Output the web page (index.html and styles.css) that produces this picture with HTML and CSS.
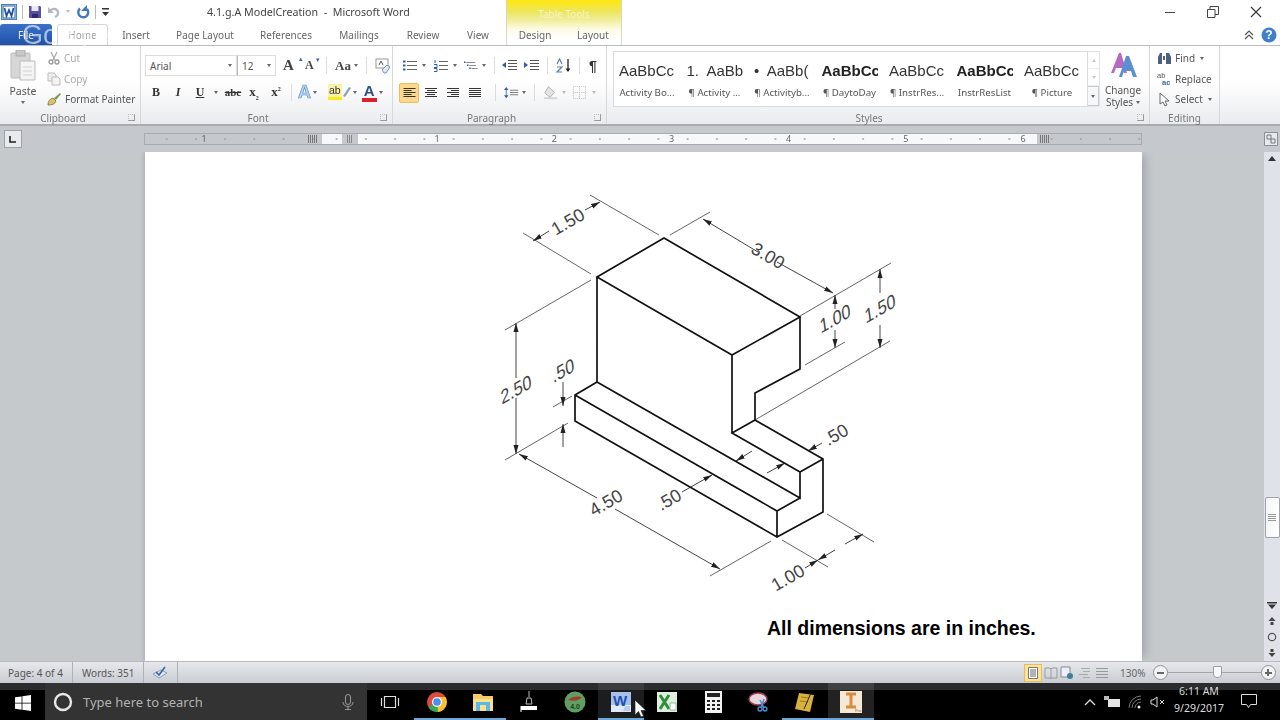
FILE: index.html
```html
<!DOCTYPE html>
<html lang="en">
<head>
<meta charset="utf-8">
<title>4.1.g.A ModelCreation - Microsoft Word</title>
<link rel="stylesheet" href="styles.css">
</head>
<body>
<div class="app">
  <header class="titlebar">
    <div class="qat">
      <svg class="q" width="16" height="16" viewBox="0 0 16 16"><rect x=".5" y=".5" width="15" height="15" fill="#dbe8f8" stroke="#4a7fc0"/><rect x="2" y="2" width="12" height="12" fill="#fff" stroke="#2b62ad"/><path d="M3.5 4l2 8 2.500-6 2.500 6 2-8" fill="none" stroke="#1f4f9e" stroke-width="1.700"/></svg>
      <i class="qsep"></i>
      <svg class="q" width="14" height="14" viewBox="0 0 14 14"><path d="M1 1h11l1 1v11H1z" fill="#5a4f9c"/><rect x="3.500" y="1" width="7" height="5" fill="#e8e8f4"/><rect x="4" y="9" width="6" height="4" fill="#2f2a6c"/></svg>
      <svg class="q" width="14" height="14" viewBox="0 0 14 14"><path d="M3 6c2-3 7-3 8 1 .5 2-1 4-3 5" fill="none" stroke="#b4b8bf" stroke-width="2.200"/><path d="M1 2v6h6z" fill="#b4b8bf"/></svg>
      <i class="caret pale"></i>
      <svg class="q redo" width="14" height="14" viewBox="0 0 14 14"><path d="M4 3.500a5 5 0 1 0 7 .5" fill="none" stroke="#3d78c8" stroke-width="2.400"/><path d="M11 0v6H5z" fill="#3d78c8"/></svg>
      <i class="qsep"></i>
      <svg class="q" width="9" height="10" viewBox="0 0 9 10"><rect x="1" y="1" width="7" height="1.500" fill="#333"/><path d="M1 5h7L4.500 9z" fill="#333"/></svg>
    </div>
    <div class="doc-title">4.1.g.A ModelCreation&nbsp; - &nbsp;Microsoft Word</div>
    <div class="winctl">
      <svg width="12" height="12" viewBox="0 0 12 12"><path d="M1 6.500h10" stroke="#444"/></svg>
      <svg width="12" height="12" viewBox="0 0 12 12"><path d="M.5 3.500h7.500v8H.5zM3 3.500V.5h8.500v8H8" fill="none" stroke="#444"/></svg>
      <svg width="12" height="12" viewBox="0 0 12 12"><path d="M1 1l10 10M11 1L1 11" stroke="#333" stroke-width="1.100"/></svg>
    </div>
  </header>

  <div class="context"><span>Table Tools</span></div>

  <nav class="tabs">
    <span class="tab file">File</span>
    <span class="tab home">Home</span>
    <span class="tab t-insert">Insert</span>
    <span class="tab t-page">Page Layout</span>
    <span class="tab t-ref">References</span>
    <span class="tab t-mail">Mailings</span>
    <span class="tab t-rev">Review</span>
    <span class="tab t-view">View</span>
    <span class="tab t-design">Design</span>
    <span class="tab t-design">Layout</span>
    <span class="tab-right">
      <svg width="12" height="10" viewBox="0 0 12 10"><path d="M2 5l4-4 4 4M2 9l4-4 4 4" fill="none" stroke="#555" stroke-width="1.200"/></svg>
      <svg width="16" height="16" viewBox="0 0 16 16"><circle cx="8" cy="8" r="7.500" fill="#3f7fcc"/><text x="8" y="12" class="help">?</text></svg>
    </span>
  </nav>
  <div class="watermark">Google</div>

  <section class="ribbon">
    <div class="group g-clip">
      <div class="gbody clip">
        <div class="paste">
          <svg width="26" height="31" viewBox="0 0 26 31"><rect x="1" y="3" width="19" height="25" rx="1" fill="#d6d6d6" stroke="#bbb"/><rect x="6" y="0" width="9" height="6" fill="#c8c8c8" stroke="#aaa"/><path d="M10 11h15v19H10z" fill="#f4f4f4" stroke="#bcbcbc"/><path d="M13 17h9M13 21h9M13 25h9" stroke="#d0d0d0"/></svg>
          <span class="pl">Paste</span>
          <i class="caret"></i>
        </div>
        <div class="clip-list">
          <div class="cr off"><svg width="14" height="14" viewBox="0 0 14 14"><path d="M4 1l4 8M10 1L6 9" stroke="#aaa" stroke-width="1.300"/><circle cx="4" cy="11" r="2" fill="none" stroke="#999" stroke-width="1.300"/><circle cx="10" cy="11" r="2" fill="none" stroke="#999" stroke-width="1.300"/></svg><span>Cut</span></div>
          <div class="cr off"><svg width="14" height="14" viewBox="0 0 14 14"><path d="M1 1h6l2 2v6H1z" fill="#eee" stroke="#bbb"/><path d="M5 5h6l2 2v6H5z" fill="#f4f4f4" stroke="#bbb"/></svg><span>Copy</span></div>
          <div class="cr"><svg width="15" height="14" viewBox="0 0 15 14"><path d="M1 13c0-4 2-6 5-7l3 3c-1 3-4 4-8 4z" fill="#d8c46a" stroke="#8f8440"/><path d="M7 6l6-5 1 1-5 6z" fill="#7a9a54"/></svg><span>Format Painter</span></div>
        </div>
      </div>
      <div class="glabel l-clip">Clipboard<i class="launch"></i></div>
    </div>

    <div class="group g-font">
      <div class="gbody fontb">
        <div class="row r1">
          <div class="combo c-font">Arial<i class="caret"></i></div>
          <div class="combo c-size">12<i class="caret"></i></div>
          <span class="glyph big">A<sup class="up">▴</sup></span>
          <span class="glyph small">A<sup class="up">▾</sup></span>
          <i class="vsep"></i>
          <span class="glyph aa">Aa</span><i class="caret"></i>
          <i class="vsep"></i>
          <svg class="erase" width="16" height="16" viewBox="0 0 16 16"><rect x="1" y="1" width="12" height="9" fill="#fff" stroke="#999"/><path d="M4 7l2-4 2 4" fill="none" stroke="#555"/><path d="M7 12l5-5 3 2-4 6H9z" fill="#dfe8f4" stroke="#7e93b0"/></svg>
        </div>
        <div class="row r2">
          <b class="fmt f-b">B</b>
          <i class="fmt f-i">I</i>
          <u class="fmt f-u">U</u><i class="caret"></i>
          <s class="fmt f-s">abc</s>
          <span class="fmt f-x">x<sub>2</sub></span>
          <span class="fmt f-x2">x<sup>2</sup></span>
          <i class="vsep"></i>
          <span class="fxa">A</span><i class="caret"></i>
          <span class="hl">ab</span>
          <svg class="pen" width="9" height="14" viewBox="0 0 9 14"><path d="M1 11l6-9 2 1-6 9z" fill="#8aa0c0"/></svg><i class="caret"></i>
          <span class="fc">A</span><i class="caret"></i>
        </div>
      </div>
      <div class="glabel l-font">Font<i class="launch"></i></div>
    </div>

    <div class="group g-para">
      <div class="gbody parab">
        <div class="row p1">
          <svg width="14" height="13" viewBox="0 0 14 13"><path d="M4 2.500h10M4 6.500h10M4 10.500h10" stroke="#666"/><path d="M0 1.500h2.500v2H0zM0 5.500h2.500v2H0zM0 9.500h2.500v2H0z" fill="#2f5fa0"/></svg><i class="caret m5"></i>
          <svg class="m8" width="14" height="13" viewBox="0 0 14 13"><path d="M5 2.500h9M5 6.500h9M5 10.500h9" stroke="#666"/><path d="M1 1v3M0 5.500h3v3H0M0 9.500h3v3H0" fill="none" stroke="#2f5fa0"/></svg><i class="caret m5"></i>
          <svg class="m7" width="15" height="13" viewBox="0 0 20 13"><path d="M3 2.500h12M7 6.500h9M10 10.500h8" stroke="#666"/><path d="M0 1h2v2H0zM4 5h2v2H4zM7 9h2v2H7z" fill="#2f5fa0"/></svg><i class="caret m3"></i>
          <i class="vsep m6"></i>
          <svg class="m7" width="15" height="13" viewBox="0 0 15 13"><path d="M6 1.500h9M6 4.500h9M6 7.500h9M6 10.500h9" stroke="#555"/><path d="M0 6l4-3v6z" fill="#2f5fa0"/></svg>
          <svg class="m7" width="15" height="13" viewBox="0 0 15 13"><path d="M6 1.500h9M6 4.500h9M6 7.500h9M6 10.500h9" stroke="#555"/><path d="M4 6L0 3v6z" fill="#2f5fa0"/></svg>
          <i class="vsep m5"></i>
          <svg class="m7" width="16" height="15" viewBox="0 0 16 15"><path d="M13 1v12" stroke="#222" stroke-width="1.300"/><path d="M10.500 10.500l2.500 3.500 2.500-3.500z" fill="#222"/><path d="M2 6l2.500-5L7 6M2 9h5l-5 5h5" fill="none" stroke="#5b7fb5" stroke-width="1.200"/></svg>
          <i class="vsep m8"></i>
          <span class="pil m9">¶</span>
        </div>
        <div class="row p2">
          <span class="al on"><svg width="13" height="11" viewBox="0 0 12 11"><path d="M0 1.500h12M0 3.500h8M0 5.500h12M0 7.500h8M0 9.500h12" stroke="#333"/></svg></span>
          <span class="al"><svg width="14" height="11" viewBox="0 0 12 11"><path d="M0 1.500h12M2 3.500h8M0 5.500h12M2 7.500h8M0 9.500h12" stroke="#333"/></svg></span>
          <span class="al"><svg width="14" height="11" viewBox="0 0 12 11"><path d="M0 1.500h12M4 3.500h8M0 5.500h12M4 7.500h8M0 9.500h12" stroke="#333"/></svg></span>
          <span class="al"><svg width="14" height="11" viewBox="0 0 12 11"><path d="M0 1.500h12M0 3.500h12M0 5.500h12M0 7.500h12M0 9.500h12" stroke="#333"/></svg></span>
          <i class="vsep m2"></i>
          <svg class="m8" width="15" height="15" viewBox="0 0 20 15"><path d="M3 3v9" stroke="#2f5fa0"/><path d="M0 4l3-4 3 4zM0 11l3 4 3-4z" fill="#2f5fa0"/><path d="M8 4.500h11M8 7.500h11M8 10.500h11" stroke="#555"/></svg><i class="caret m3"></i>
          <i class="vsep m7"></i>
          <svg class="m8" width="15" height="15" viewBox="0 0 17 15"><path d="M6 1l7 6-5 6-6-5z" fill="#e3e3e3" stroke="#aaa"/><path d="M1 14h15" stroke="#d4d4d4" stroke-width="2"/></svg><i class="caret pale m4"></i>
          <svg class="m7" width="13" height="13" viewBox="0 0 14 14"><path d="M.5.500h13v13H.5zM7 .5v13M.5 7h13" fill="none" stroke="#bbb" stroke-dasharray="1 1"/></svg><i class="caret pale m6"></i>
        </div>
      </div>
      <div class="glabel l-para">Paragraph<i class="launch"></i></div>
    </div>

    <div class="group g-styles">
      <div class="gbody stylesb">
        <div class="gallery">
          <div class="sty"><span class="sa">AaBbCc</span><span class="sl">Activity Bo...</span></div>
          <div class="sty"><span class="sa">1.&nbsp; AaBb</span><span class="sl">¶ Activity ...</span></div>
          <div class="sty"><span class="sa">•&nbsp; AaBb(</span><span class="sl">¶ Activityb...</span></div>
          <div class="sty"><span class="sa bold">AaBbCc</span><span class="sl">¶ DaytoDay</span></div>
          <div class="sty"><span class="sa">AaBbCc</span><span class="sl">¶ InstrRes...</span></div>
          <div class="sty"><span class="sa bold">AaBbCc</span><span class="sl">InstrResList</span></div>
          <div class="sty"><span class="sa">AaBbCc</span><span class="sl">¶ Picture</span></div>
        </div>
        <div class="spin">
          <span class="sp"><i class="tri-up"></i></span>
          <span class="sp"><i class="tri-dn"></i></span>
          <span class="sp more"><i class="tri-more"></i></span>
        </div>
        <div class="change">
          <svg width="28" height="28" viewBox="0 0 28 28"><path d="M2 22L10 2h2l6 20h-3l-1.500-5H7L5 22z" fill="#b56ac0"/><path d="M10 26L17 5h3l8 21h-4l-2-6h-7l-2 6z" fill="#5b8fd0"/></svg>
          <span>Change</span>
          <span>Styles<i class="caret"></i></span>
        </div>
      </div>
      <div class="glabel l-sty">Styles<i class="launch"></i></div>
    </div>

    <div class="group g-edit">
      <div class="gbody clip-list editb">
        <div class="cr dim"><svg width="15" height="13" viewBox="0 0 15 13"><path d="M1 12V5l2-4h2v11zM9 12V1h3l2 4v7zM6 4h2v4H6z" fill="#4c5f80"/></svg><span>Find</span><i class="caret"></i></div>
        <div class="cr dim"><svg width="15" height="14" viewBox="0 0 15 14"><text x="0" y="6" class="rp">ab</text><text x="5" y="13" class="rp blue">ac</text></svg><span>Replace</span></div>
        <div class="cr dim"><svg width="15" height="15" viewBox="0 0 15 15"><path d="M3 1v11l3-2 2 4 2-1-2-4h4z" fill="#fff" stroke="#666"/></svg><span>Select</span><i class="caret"></i></div>
      </div>
      <div class="glabel">Editing</div>
    </div>
  </section>

  <div class="rulerbar">
    <span class="corner"><svg width="10" height="10" viewBox="0 0 10 10"><path d="M2 2v6h6" fill="none" stroke="#222" stroke-width="1.600"/></svg></span>
    <div class="ruler">
      <div class="seg seg-l"><span class="dg">1</span></div>
      <div class="seg seg-w">
        <span class="dg">1</span><span class="dg">2</span><span class="dg">3</span><span class="dg">4</span><span class="dg">5</span><span class="dg">6</span>
      </div>
      <div class="seg seg-r"></div>
      <i class="stop s1"></i><i class="stop s2"></i><i class="stop s3"></i>
    </div>
    <span class="viewbtn"><svg width="14" height="14" viewBox="0 0 14 14"><path d="M.5.500h13v13H.5z" fill="#e6e9ee" stroke="#8a8f98"/><path d="M3 3h4v4H3zM7 7h4v4H7z" fill="none" stroke="#777"/></svg></span>
  </div>

  <main class="workspace">
    <div class="page">
      <svg class="drawing" width="997" height="460" viewBox="145 152 997 460">
        <defs>
          <marker id="ah" markerWidth="9" markerHeight="6" refX="9" refY="3" orient="auto-start-reverse" markerUnits="userSpaceOnUse"><path d="M0 .5L9 3 0 5.500z" fill="#222"/></marker>
        </defs>
        <g class="thin">
          <path d="M523 233L591 274M590 195L659 235M670 235L710 212M505 330L591 280M505 460L568 423M553 407L572 396M800 316L891 263M755 420L890 341M805 365L845 342M710 576L771 541M827 514L874 542M782 540L828 567"/>
          <path class="dim" d="M549 231L533 241"/><path class="dim" d="M585 210L600 202"/>
          <path class="dim" d="M758 252L703 219"/><path class="dim" d="M777 262L833 293"/>
          <path class="dim" d="M835 309L835 295"/><path class="dim" d="M835 330L835 348"/>
          <path class="dim" d="M880 293L880 269"/><path class="dim" d="M880 325L880 348"/>
          <path class="dim" d="M516 378L516 323"/><path class="dim" d="M516 398L516 454"/>
          <path class="dim" d="M563 382L563 406"/><path class="dim" d="M563 447L563 424"/>
          <path class="dim" d="M597 498L519 454"/><path class="dim" d="M615 509L720 569"/>
          <path class="dim" d="M682 492L712 475"/>
          <path class="dim" d="M752 451L736 461"/><path class="dim" d="M767 473L785 463"/>
          <path class="dim" d="M822 443L808 451"/>
          <path class="dim" d="M805 568L818 560"/>
          <path class="dim" d="M835 550L818 560"/><path class="dim" d="M845 544L863 534"/>
        </g>
        <g class="thick">
          <path d="M597 277L664 238L800 317L732 355ZM597 277V382M732 355V433M800 317V369L755 393V420L823 459V512L777 537L575 421V395L597 382L800 498V472L732 433L755 420M800 472L823 459M575 395L777 511V537M777 511L800 498"/>
        </g>
        <g class="dimtext">
          <text transform="translate(571 227) rotate(-30)">1.50</text>
          <text transform="translate(765 261) rotate(30)">3.00</text>
          <text transform="translate(836 325) rotate(-30) skewX(-22)">1.00</text>
          <text transform="translate(881 315) rotate(-30) skewX(-22)">1.50</text>
          <text transform="translate(517 396) rotate(-30) skewX(-22)">2.50</text>
          <text transform="translate(564 377) rotate(-30) skewX(-22)">.50</text>
          <text transform="translate(609 508) rotate(-30)">4.50</text>
          <text transform="translate(672 505) rotate(-30)">.50</text>
          <text transform="translate(839 440) rotate(-30)">.50</text>
          <text transform="translate(791 583) rotate(-30)">1.00</text>
        </g>
      </svg>
      <p class="note">All dimensions are in inches.</p>
    </div>
    <aside class="scroll">
      <svg class="sarrow" width="10" height="10" viewBox="0 0 10 10"><path d="M5 2l4 5H1z" fill="#333"/></svg>
      <div class="thumb"><i></i></div>
      <div class="sbtm">
        <svg width="10" height="8" viewBox="0 0 10 8"><path d="M0 0h10v1.500H0zM1 2.500h8L5 7z" fill="#333"/></svg>
        <svg width="10" height="10" viewBox="0 0 10 10"><path d="M5 1l3.500 4h-7zM3.500 6h3v3h-3z" fill="#444"/></svg>
        <svg width="10" height="10" viewBox="0 0 10 10"><circle cx="5" cy="5" r="3.700" fill="none" stroke="#555" stroke-width="1.200"/></svg>
        <svg width="10" height="10" viewBox="0 0 10 10"><path d="M5 9l3.500-4h-7zM3.500 4h3V1h-3z" fill="#444"/></svg>
      </div>
    </aside>
  </main>

  <footer class="status">
    <span class="st st-page">Page: 4 of 4</span>
    <span class="st st-words">Words: 351</span>
    <span class="st st-check"><svg width="16" height="14" viewBox="0 0 16 14"><path d="M1 8l8-4 6 3-8 5z" fill="#dfe6f2" stroke="#8d9db8"/><path d="M4 6l3 3 6-8" fill="none" stroke="#3a68aa" stroke-width="1.700"/></svg></span>
    <span class="status-right">
      <span class="vw on"><svg width="12" height="12" viewBox="0 0 12 12"><path d="M1.500.500h9v11h-9z" fill="#fff" stroke="#777"/><path d="M3 3h6M3 5h6M3 7h6M3 9h6" stroke="#666"/></svg></span>
      <svg class="m2 flexn" width="14" height="12" viewBox="0 0 14 12"><path d="M1 1h5l1 1 1-1h5v10H8l-1 1-1-1H1zM7 2v9" fill="none" stroke="#999"/></svg>
      <svg class="m2 flexn" width="14" height="13" viewBox="0 0 14 13"><path d="M1 1h9v10H1z" fill="#eef" stroke="#888"/><circle cx="10" cy="10" r="3" fill="#3d7f9a"/></svg>
      <svg class="m4 flexn" width="12" height="12" viewBox="0 0 12 12"><path d="M3 1.500h9M5 4.500h7M1 7.500h9M5 10.500h7" stroke="#aaa"/></svg>
      <svg class="m6 flexn" width="12" height="12" viewBox="0 0 12 12"><path d="M0 1.500h12M0 4.500h12M0 7.500h12M0 10.500h12" stroke="#999"/></svg>
      <span class="zoomp">130%</span>
      <span class="zb"><i></i></span>
      <span class="slider"><i class="notch"></i></span>
      <span class="zb plus"><i></i></span>
    </span>
  </footer>

  <div class="taskbar">
    <span class="start"><svg width="16" height="16" viewBox="0 0 16 16"><path d="M0 2.300l6.600-.9v6.300H0zM7.400 1.300L16 0v7.700H7.400zM0 8.400h6.600v6.300L0 13.800zM7.400 8.400H16V16l-8.600-1.200z" fill="#fff"/></svg></span>
    <div class="search">
      <svg width="20" height="20" viewBox="0 0 20 20"><circle cx="10" cy="10" r="8" fill="none" stroke="#e8e8e8" stroke-width="2.400"/></svg>
      <span class="stext">Type here to search</span>
      <svg class="mic" width="12" height="16" viewBox="0 0 12 16"><rect x="3.500" y=".5" width="5" height="10" rx="2.500" fill="none" stroke="#999"/><path d="M1 8c0 6 10 6 10 0M6 12v3M3 15.500h6" fill="none" stroke="#999"/></svg>
    </div>
    <span class="task tv"><svg width="20" height="14" viewBox="0 0 20 14"><path d="M4.500 1.500h11v11h-11zM1.500 3v8M18.500 3v8" fill="none" stroke="#ddd" stroke-width="1.200"/></svg></span>
    <span class="task open"><svg width="22" height="22" viewBox="0 0 22 22"><circle cx="11" cy="11" r="10" fill="#dd4b3e"/><path d="M11 11L2.300 16A10 10 0 0 0 14 20.500z" fill="#3aa757"/><path d="M11 6h8.500A10 10 0 0 1 12 21z" fill="#fbc02d"/><circle cx="11" cy="11" r="5" fill="#fff"/><circle cx="11" cy="11" r="3.800" fill="#4a8ff0"/></svg></span>
    <span class="task open"><svg width="20" height="18" viewBox="0 0 20 18"><path d="M0 1h8l2 2h10v15H0z" fill="#f2cd62"/><rect x="0" y="6" width="20" height="12" fill="#fbe18f"/><rect x="3" y="9" width="14" height="9" fill="#5cb8e6"/><rect x="7" y="12" width="6" height="6" fill="#fbe18f"/></svg></span>
    <span class="task"><svg width="18" height="22" viewBox="0 0 18 22"><rect x="1" y="15" width="16" height="4" fill="#fff"/><path d="M1 15v6" stroke="#fff"/><path d="M9 0v6M7 7h4l1 6H6z" fill="none" stroke="#bbb"/></svg></span>
    <span class="task"><svg width="22" height="22" viewBox="0 0 22 22"><circle cx="11" cy="11" r="10.500" fill="#5f9f63"/><path d="M4 9c4-4 10-4 14-3-2 3-8 5-14 3z" fill="#a33a2c"/><text x="11" y="18" class="gt">4.0</text></svg></span>
    <span class="task word"><svg width="20" height="20" viewBox="0 0 20 20"><rect width="20" height="20" fill="#dfe9f7"/><rect x="0" y="0" width="20" height="13" fill="#3f78d0" opacity=".35"/><text x="9" y="14" class="wl">W</text><path d="M14 14l5 0v5h-7z" fill="#b8cdea"/></svg></span>
    <span class="task"><svg width="20" height="20" viewBox="0 0 20 20"><rect width="20" height="20" fill="#dfeedd"/><path d="M3 3l9 14M12 3L3 17" stroke="#2f8f3c" stroke-width="3"/><path d="M13 11h6v7h-6z" fill="#fff" stroke="#8fbf8f"/></svg></span>
    <span class="task"><svg width="17" height="22" viewBox="0 0 17 22"><rect width="17" height="22" fill="#f2f2f2"/><rect x="2" y="2" width="13" height="4" fill="#222"/><path d="M2 9h3v2H2zM7 9h3v2H7zM12 9h3v2h-3zM2 13h3v2H2zM7 13h3v2H7zM12 13h3v2h-3zM2 17h3v2H2zM7 17h3v2H7zM12 17h3v2h-3z" fill="#222"/></svg></span>
    <span class="task"><svg width="22" height="20" viewBox="0 0 22 20"><ellipse cx="10" cy="7" rx="9" ry="6" fill="#e5d8dc" stroke="#a33b4f" stroke-width="1.500"/><path d="M12 8l4 8M16 7l-3 9" stroke="#4a8fd8" stroke-width="1.600"/><circle cx="12" cy="17" r="2" fill="none" stroke="#4a8fd8" stroke-width="1.300"/><circle cx="17" cy="17" r="2" fill="none" stroke="#4a8fd8" stroke-width="1.300"/></svg></span>
    <span class="task open"><svg width="20" height="22" viewBox="0 0 20 22"><path d="M4 2l15 2-4 17-15-3z" fill="#d8b23c"/><path d="M6 6l8 1M5 10l8 1" stroke="#9c7c18"/><path d="M16 2l-7 16" stroke="#222"/></svg></span>
    <span class="task inv open"><svg width="22" height="22" viewBox="0 0 22 22"><rect width="22" height="22" fill="#f4e8d6"/><path d="M6 3h10M6 16h10M11 3v13" stroke="#d98a3a" stroke-width="3"/><text x="18" y="21" class="pro">Pro</text></svg></span>
    <div class="tray">
      <svg width="12" height="8" viewBox="0 0 12 8"><path d="M1 7l5-5 5 5" fill="none" stroke="#ddd" stroke-width="1.300"/></svg>
      <svg width="16" height="12" viewBox="0 0 16 12"><rect x="4" y="3" width="12" height="8" fill="#e4e4e4"/><rect x="0" y="0" width="5" height="4" fill="#bbb"/></svg>
      <svg width="14" height="14" viewBox="0 0 14 14"><path d="M1 13A12 12 0 0 1 13 1M4 13a9 9 0 0 1 9-9M7 13a6 6 0 0 1 6-6" fill="none" stroke="#777"/><circle cx="11" cy="12" r="1.500" fill="#eee"/></svg>
      <svg width="16" height="12" viewBox="0 0 16 12"><path d="M1 4h2l4-3v10L3 8H1z" fill="none" stroke="#ddd"/><path d="M10 4l4 4M14 4l-4 4" stroke="#ddd"/></svg>
      <div class="clock"><span>6:11 AM</span><span>9/29/2017</span></div>
      <svg class="notif" width="16" height="15" viewBox="0 0 16 15"><path d="M.5.500h15v10H9.500l-2 3-2-3h-5z" fill="none" stroke="#ddd"/></svg>
    </div>
  </div>
  <svg class="cursor" width="12" height="18" viewBox="0 0 12 18"><path d="M0 0v15l3.500-3.500L6 17l2.500-1L6 10.500h5z" fill="#fff" stroke="#111" stroke-width=".6"/></svg>
</div>
</body>
</html>
```
FILE: styles.css
```css
* { box-sizing: border-box; }
html, body { margin: 0; padding: 0; }
body { width: 1280px; height: 720px; overflow: hidden; background: #fff; font-family: "Noto Sans", "Open Sans", sans-serif; color: #444; }
i { display: inline-block; font-style: normal; }

.app { position: relative; width: 1280px; height: 720px; display: flex; flex-direction: column; overflow: hidden; filter: blur(.35px); }

.m2 { margin-left: 2px; } .m3 { margin-left: 3px; } .m4 { margin-left: 4px; } .m5 { margin-left: 5px; } .m6 { margin-left: 6px; } .m7 { margin-left: 7px; } .m8 { margin-left: 8px; } .m9 { margin-left: 9px; }
.flexn { flex: none; }

/* title */
.titlebar { height: 24px; display: flex; align-items: center; font-size: 10.700px; position: relative; z-index: 2; padding-bottom: 1px; }
.qat { width: 207px; display: flex; align-items: center; gap: 5px; padding-left: 1px; }
.qsep { width: 1px; height: 14px; background: #bbb; }
.redo { margin-left: 1px; }
.doc-title { width: 299px; color: #444; white-space: nowrap; }
.winctl { margin-left: auto; display: flex; align-items: center; gap: 31px; padding-right: 18px; }

.context { position: absolute; left: 506px; top: 0; width: 116px; height: 45px; z-index: 1; background: linear-gradient(#ffe70f 0, #ece65f 12px, #f0ee9b 20px, #fdfce8 30px, #fff 38px); border-left: 1px solid #d8d8c0; border-right: 1px solid #d8d8c0; text-align: center; font-size: 10px; color: #f6f4c8; padding-top: 7px; }

/* tabs */
.tabs { height: 22px; display: flex; align-items: stretch; font-size: 10px; border-bottom: 1px solid #b9bcc0; position: relative; z-index: 2; color: #666; }
.tab { display: flex; align-items: center; justify-content: center; white-space: nowrap; }
.file { width: 52px; background: linear-gradient(#3a72c8, #1f52a8); color: #e8eefa; margin-right: 5px; border-radius: 3px 3px 0 0; }
.home { width: 51px; background: #fff; border: 1px solid #d4d6da; border-bottom: 0; border-radius: 3px 3px 0 0; color: #999; }
.t-insert { width: 56px; } .t-page { width: 82px; } .t-ref { width: 80px; } .t-mail { width: 66px; } .t-rev { width: 62px; }
.t-view { width: 48px; margin-right: 4px; } .t-design { width: 58px; }
.tab-right { margin-left: auto; display: flex; align-items: center; gap: 6px; padding-right: 3px; }
.help { font: bold 12px "Liberation Sans", sans-serif; fill: #fff; text-anchor: middle; }
.watermark { position: absolute; left: 22px; top: 20px; font: 27px "Liberation Sans", sans-serif; color: rgba(255,255,255,.6); z-index: 3; white-space: nowrap; }

/* ribbon */
.ribbon { height: 80px; display: flex; background: linear-gradient(#fff 0, #fff 45%, #e9ebee 100%); border-bottom: 2px solid #a8abb0; font-size: 10px; color: #555; }
.group { display: flex; flex-direction: column; border-right: 1px solid #d6d8dc; position: relative; }
.gbody { height: 66px; display: flex; }
.glabel { height: 12px; text-align: center; font-size: 10px; color: #777; line-height: 12px; position: relative; }
.l-clip { padding-right: 14px; } .l-font { padding-right: 17px; } .l-para { padding-right: 16px; } .l-sty { padding-right: 18px; }
.launch { position: absolute; right: 5px; top: 2px; width: 7px; height: 7px; border-right: 1px solid #999; border-bottom: 1px solid #999; border-left: 1px dotted #bbb; border-top: 1px dotted #bbb; }
.g-clip { width: 141px; } .g-font { width: 252px; } .g-para { width: 214px; } .g-styles { width: 543px; } .g-edit { width: 70px; }
.caret { width: 0; height: 0; border: 2.500px solid transparent; border-top: 3px solid #666; border-bottom: 0; flex: none; }
.caret.pale { border-top-color: #bbb; }

.clip { padding-left: 9px; }
.paste { width: 28px; display: flex; flex-direction: column; align-items: center; padding-top: 4px; }
.pl { margin-top: 3px; font-size: 10.500px; line-height: 14px; }
.paste .caret { margin-top: 3px; }
.clip-list { display: flex; flex-direction: column; padding-top: 2px; margin-left: 10px; }
.cr { height: 20.500px; display: flex; align-items: center; gap: 3px; white-space: nowrap; }
.cr svg { flex: none; }
.off span { color: #aaa; }

.fontb, .parab { flex-direction: column; }
.row { display: flex; align-items: center; }
.r1 { height: 30px; padding-left: 4px; padding-top: 9px; }
.combo { height: 21px; background: #fff; border: 1px solid #ddd; display: flex; align-items: center; justify-content: space-between; padding: 0 4px; font: 10px "Noto Sans", sans-serif; color: #555; }
.c-font { width: 92px; } .c-size { width: 39px; border-left: 1px solid #bbb; }
.glyph { font-family: "Liberation Serif", serif; font-weight: bold; color: #444; position: relative; }
.up { font-size: 7px; position: absolute; left: 100%; top: -2px; margin-left: -2px; color: #3a68aa; font-family: "DejaVu Sans", sans-serif; font-weight: normal; }
.big { font-size: 15px; margin-left: 7px; width: 18px; }
.small { font-size: 12px; margin-left: 1px; width: 16px; padding-left: 3px; }
.aa { font-size: 13px; margin-right: 3px; }
.vsep { width: 1px; height: 17px; background: #dcdde0; margin: 0 8px; flex: none; }
.erase { flex: none; }
.r2 { height: 30px; padding-left: 8px; padding-top: 2px; }
.fmt { font-family: "Liberation Serif", serif; color: #333; font-size: 12px; width: 14px; text-align: center; font-weight: bold; }
.f-b { margin-right: 8px; } .f-i { margin-right: 8px; font-style: italic; } .f-u { margin-right: 7px; }
.f-s { font-size: 11px; margin: 0 4px 0 5px; width: 20px; } .f-x { margin-right: 8px; font-size: 13px; } .f-x2 { font-size: 13px; }
.fmt sub, .fmt sup { font-size: 6px; }
.r2 .vsep { margin: 0 6px 0 8px; }
.fxa { font: bold 18px "Liberation Sans", sans-serif; color: #b8d3ef; -webkit-text-stroke: .7px #5d92cf; margin-right: 2px; line-height: 18px; }
.hl { font: 10.500px "Liberation Sans", sans-serif; color: #333; background: linear-gradient(#f7f3a8, #f7f3a8); border-bottom: 3px solid #ffe818; margin-left: 11px; line-height: 12px; height: 16px; padding: 0 1px; }
.pen { margin-right: 2px; }
.fc { font: bold 15px "Liberation Sans", sans-serif; color: #2d4f8b; border-bottom: 4px solid #d9202f; line-height: 15px; margin-left: 5px; margin-right: 2px; width: 15px; text-align: center; }

.parab { padding-left: 10px; }
.p1 { height: 30px; padding-top: 9px; }
.p1 svg, .p2 svg { flex: none; }
.p1 .vsep, .p2 .vsep { margin-top: 0; margin-bottom: 0; margin-right: 0; }
.pil { font: bold 14px "Liberation Sans", sans-serif; color: #333; }
.p2 { height: 32px; margin-left: -4px; padding-top: 1px; }
.al { width: 20px; height: 20px; display: flex; align-items: center; justify-content: center; margin-right: 2px; border-radius: 2px; border: 1px solid transparent; }
.al.on { background: #fbd88a; border-color: #e8bd5f; }

.stylesb { padding-left: 6px; }
.gallery { margin-top: 5px; width: 475px; height: 56px; background: #fff; border: 1px solid #d8dade; display: grid; grid-template-columns: repeat(7, 56px); column-gap: 11.500px; padding: 0 5px; }
.sty { display: flex; flex-direction: column; align-items: center; min-width: 0; }
.sa { width: 56px; overflow: hidden; white-space: nowrap; font: 15px "Liberation Sans", sans-serif; color: #333; height: 18px; line-height: 18px; margin-top: 10px; }
.sa.bold { font-weight: bold; color: #222; }
.sl { margin-top: 6px; font-size: 9.700px; line-height: 14px; white-space: nowrap; color: #555; }
.spin { width: 12px; margin-top: 5px; height: 56px; display: flex; flex-direction: column; border: 1px solid #e2e4e8; border-left: 0; }
.sp { flex: 1; display: flex; align-items: center; justify-content: center; border-bottom: 1px solid #eceef0; }
.more { flex: 1.100; background: #f6f7f9; border: 1px solid #c8cbd0; border-left: 0; }
.tri-up, .tri-dn, .tri-more { width: 0; height: 0; border: 2.500px solid transparent; }
.tri-up { border-bottom: 3px solid #c4c6ca; border-top: 0; }
.tri-dn { border-top: 3px solid #c4c6ca; border-bottom: 0; }
.tri-more { border-top: 3px solid #666; border-bottom: 0; }
.change { width: 46px; display: flex; flex-direction: column; align-items: center; font-size: 10px; line-height: 12px; padding-top: 5px; }
.change svg { margin-bottom: 5px; }
.change .caret { margin-left: 3px; vertical-align: 2px; }

.editb { margin-left: 0; padding-left: 7px; }
.dim { gap: 3px; }
.dim .caret { margin-left: 2px; }
.rp { font: 7.500px "Liberation Sans", sans-serif; fill: #555; }
.blue { fill: #3a68aa; font-weight: bold; }

/* ruler */
.rulerbar { height: 26px; display: flex; align-items: center; background: #c5c9ce; position: relative; }
.corner { margin-left: 4px; width: 18px; height: 18px; background: #e8eaee; border: 1px solid #9ea2a8; display: flex; align-items: center; justify-content: center; }
.ruler { margin-left: 122px; width: 998px; height: 12px; display: flex; position: relative; border: 1px solid #a8acb2; font: 9px "Noto Sans", sans-serif; color: #666; line-height: 10px; }
.seg { height: 100%; background-image: radial-gradient(circle, #999 .6px, transparent .9px); background-size: 29.250px 100%; }
.seg-l { width: 177px; background-color: #c5c9ce; padding-left: 53px; background-position: 7px 0; }
.seg-w { width: 715px; background-color: #f7f8fa; display: flex; padding-left: 56.500px; overflow: hidden; background-position: 0 0; }
.seg-r { flex: 1; background-color: #c5c9ce; }
.dg { width: 12px; text-align: center; flex: none; display: block; }
.seg-w .dg { width: 117.200px; }
.stop { position: absolute; top: 1px; width: 9px; height: 8px; background: repeating-linear-gradient(90deg, #777 0 1px, transparent 1px 2px); }
.s1 { left: 163px; }
.s2 { left: 197px; width: 16px; top: 0; height: 10px; background: repeating-linear-gradient(90deg, #888 0 1px, transparent 1px 2px) 5px 1px / 6px 8px no-repeat, #c5c9ce; }
.s3 { left: 895px; }
.viewbtn { margin-left: auto; margin-right: 2px; display: flex; }

/* workspace */
.workspace { height: 509px; display: flex; background: #c5c9cc; }
.page { margin-left: 145px; width: 997px; height: 509px; background: #fff; box-shadow: 8px 0 8px -4px #a4a7ac, -2px 0 3px #b0b3b8; }
.drawing { display: block; }
.thin path { fill: none; stroke: #666; stroke-width: 1; }
.thin .dim { stroke: #444; marker-end: url(#ah); }
.thick path { fill: none; stroke: #111; stroke-width: 1.700; stroke-linejoin: miter; }
.dimtext text { font: 18px "Liberation Sans", sans-serif; fill: #444; text-anchor: middle; }
.note { margin: 2px 0 0 622px; font: bold 19.500px/28px "Liberation Sans", sans-serif; color: #000; white-space: nowrap; }
.scroll { margin-left: auto; width: 16px; background: #dfe2e8; display: flex; flex-direction: column; align-items: center; position: relative; }
.sarrow { margin-top: 2px; }
.thumb { margin-top: 333px; width: 15px; height: 41px; background: linear-gradient(90deg, #f4f5f7, #fff); border: 1px solid #a0a4aa; border-radius: 2px; display: flex; align-items: center; justify-content: center; }
.thumb i { width: 8px; height: 8px; background: repeating-linear-gradient(#999 0 1px, transparent 1px 2px); }
.sbtm { margin-top: auto; display: flex; flex-direction: column; align-items: center; gap: 6px; padding-bottom: 3px; }

/* status */
.status { height: 22px; display: flex; align-items: center; background: linear-gradient(#e6e8ec, #c9ccd2); font-size: 10px; color: #555; border-top: 1px solid #b8babe; }
.st { height: 100%; display: flex; align-items: center; border-right: 1px solid #aeb1b6; white-space: nowrap; }
.st-page { width: 73px; padding-left: 8px; } .st-words { width: 71px; padding-left: 9px; } .st-check { width: 34px; padding-left: 8px; }
.status-right { margin-left: auto; display: flex; align-items: center; padding-right: 4.500px; }
.vw { width: 18px; height: 18px; display: flex; align-items: center; justify-content: center; background: #fbe29a; border: 1px solid #e3bf62; }
.zoomp { width: 26px; margin: 0 6.500px 0 12px; color: #666; white-space: nowrap; }
.zb { width: 15px; height: 15px; border-radius: 50%; border: 1px solid #8e9298; background: #f2f3f5; position: relative; display: flex; align-items: center; justify-content: center; }
.zb i { width: 7px; height: 2px; background: #666; }
.plus::after { content: ""; position: absolute; width: 2px; height: 7px; background: #666; }
.slider { width: 93px; height: 1px; background: #a3a6ab; position: relative; }
.notch { position: absolute; left: 45px; top: -6px; width: 9px; height: 12px; background: #f7f8fa; border: 1px solid #9b9fa5; border-radius: 1px 1px 4px 4px; }

/* taskbar */
.taskbar { height: 37px; display: flex; align-items: center; background: linear-gradient(#2a2c2e 0 7px, #000 7px); color: #ddd; flex: none; }
.start { width: 45px; display: flex; justify-content: center; padding-top: 2px; }
.search { width: 322px; height: 37px; background: #333; display: flex; align-items: center; padding-left: 8px; gap: 10px; }
.stext { font-size: 13px; color: #b2b2b2; }
.mic { margin-left: auto; margin-right: 13px; }
.task { width: 46px; height: 37px; display: flex; align-items: center; justify-content: center; flex: none; padding-top: 2px; border-bottom: 2px solid transparent; }
.tv { margin-right: 1px; }
.task.open { border-bottom-color: #6ea8d8; }
.word { background: linear-gradient(#3a3c3e 0 7px, #1b1d1f 7px); border-bottom-color: #6ea8d8; }
.inv { background: linear-gradient(#3f4143 0 7px, #222 7px); }
.wl { font: bold 15px "Liberation Sans", sans-serif; fill: #1f52b0; text-anchor: middle; }
.gt { font: bold 7px "Liberation Sans", sans-serif; fill: #1d3d1f; text-anchor: middle; }
.pro { font: 4px "Liberation Sans", sans-serif; fill: #a06020; text-anchor: middle; }
.tray { margin-left: auto; display: flex; align-items: center; gap: 8px; padding-right: 23px; }
.clock { width: 60px; margin-left: -5px; display: flex; flex-direction: column; align-items: center; font-size: 10.500px; line-height: 17px; color: #ddd; padding-bottom: 3px; }
.notif { margin-left: 4px; }
.cursor { position: absolute; left: 635px; top: 700px; }
```
